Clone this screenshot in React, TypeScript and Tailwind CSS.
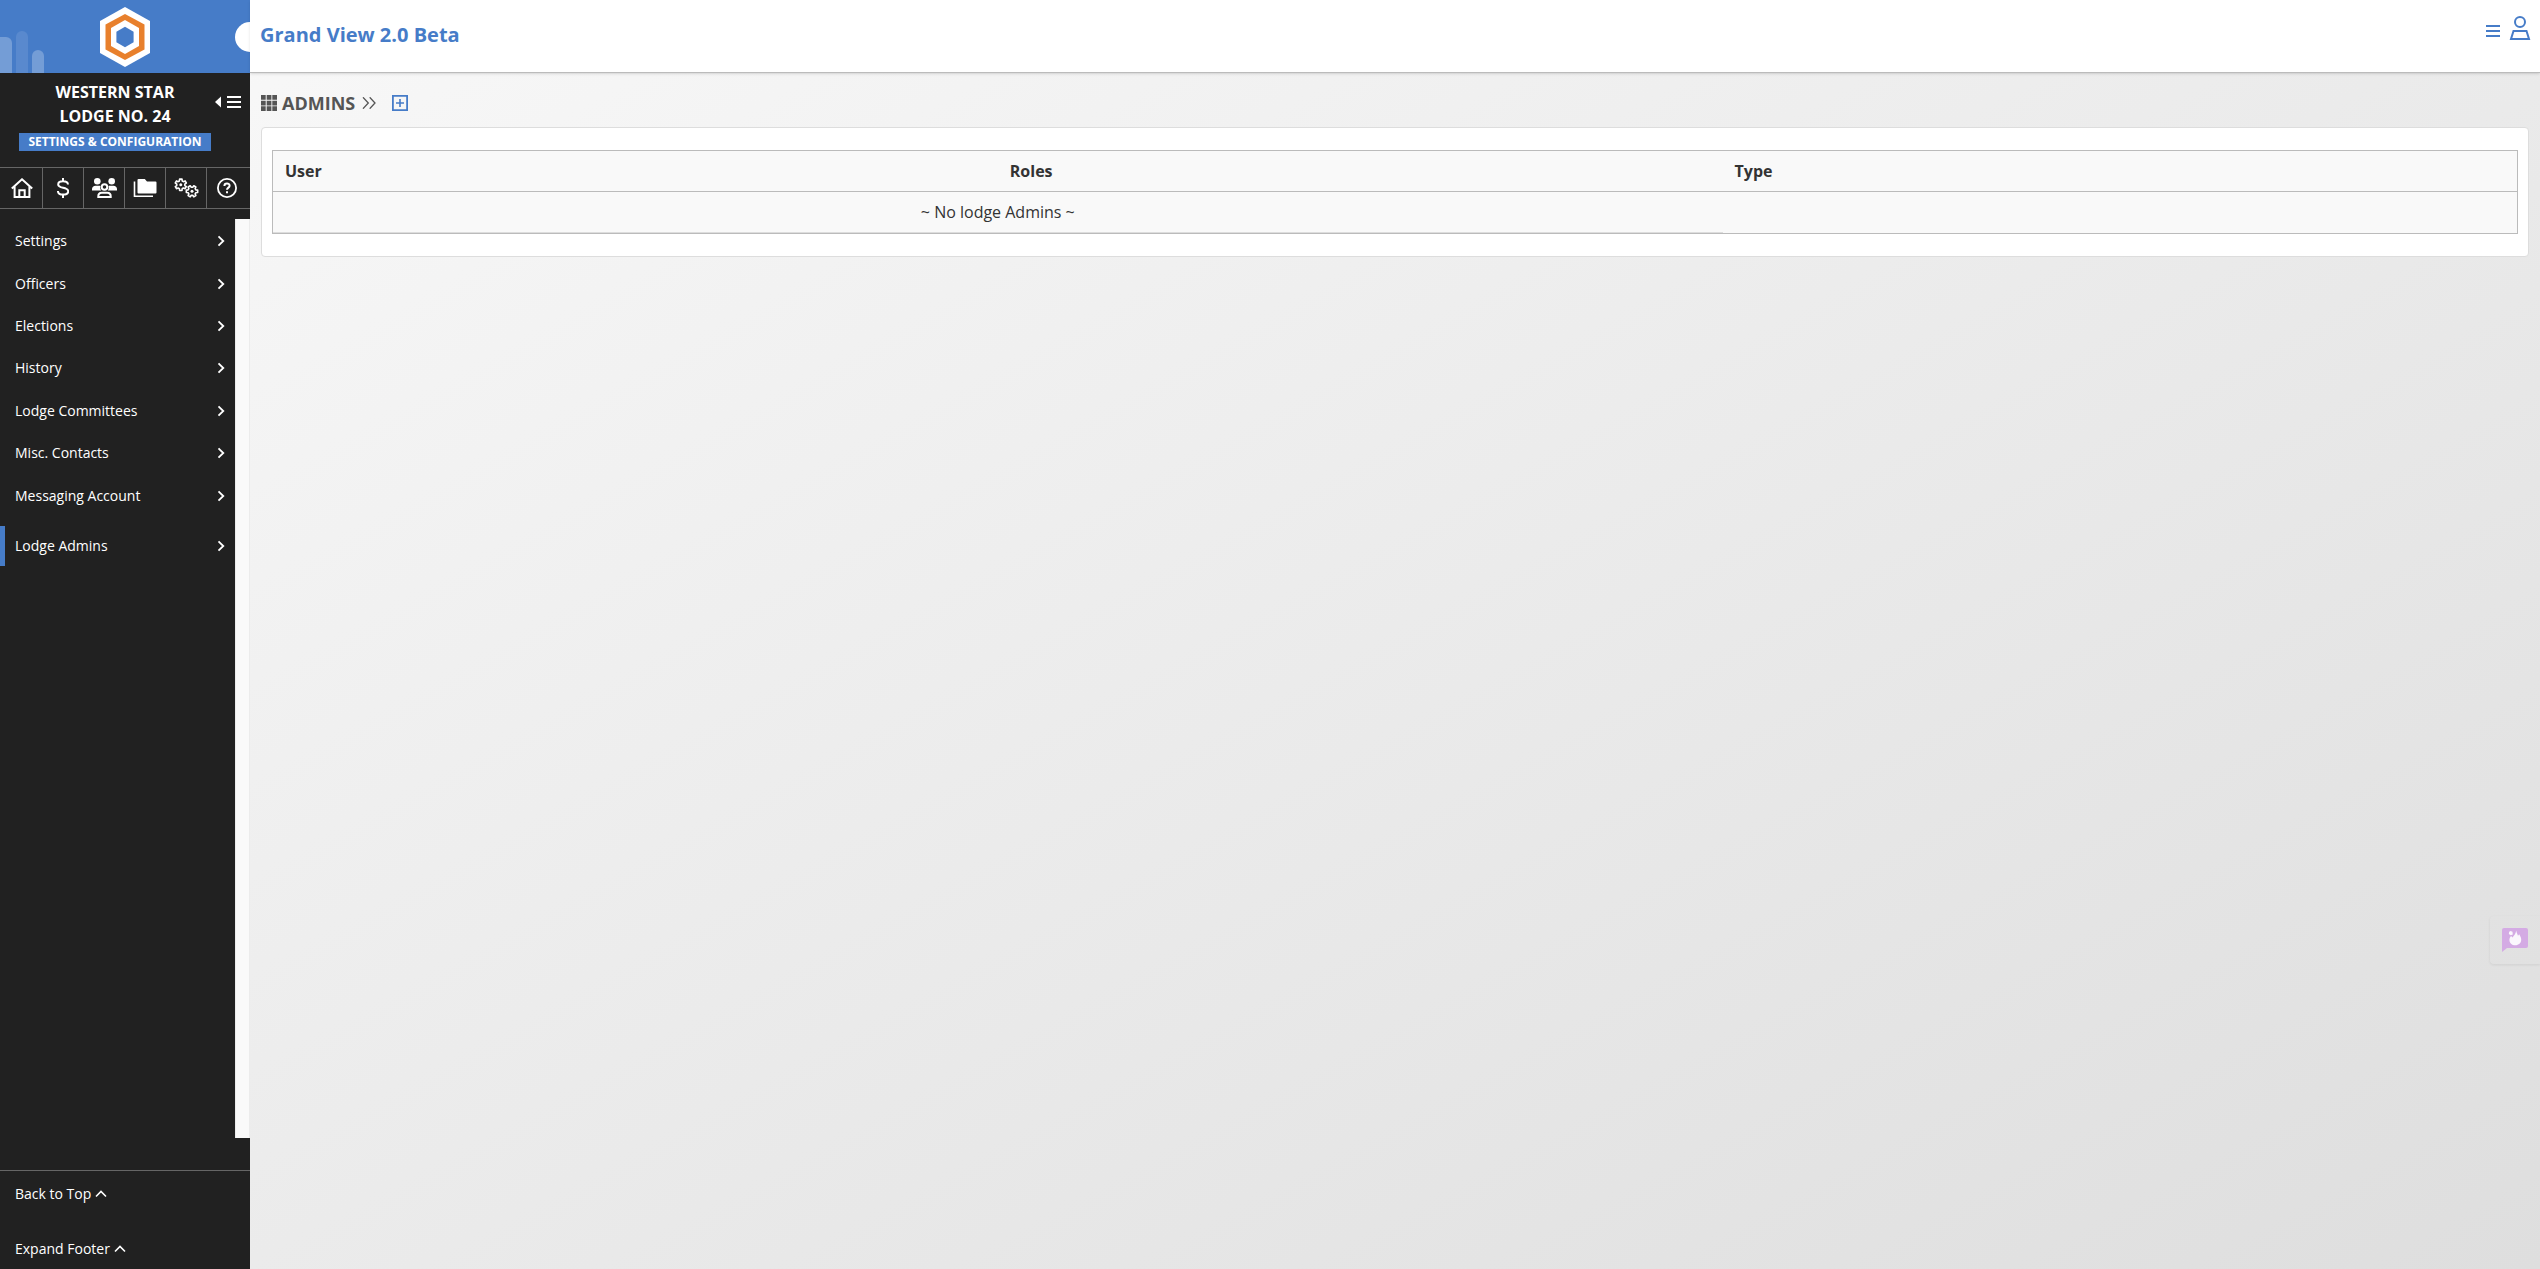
import React from 'react';

const menu = ['Settings', 'Officers', 'Elections', 'History', 'Lodge Committees', 'Misc. Contacts', 'Messaging Account'];

function Svg({ className, box = '0 0 24 24', children }: { className: string; box?: string; children: React.ReactNode }) {
  return (
    <svg className={className} viewBox={box} fill="none" stroke="currentColor" strokeWidth={2} aria-hidden="true">
      {children}
    </svg>
  );
}

const Chevron = () => (
  <Svg className="h-3 w-2" box="0 0 8 12">
    <path d="M1.500 1.300 6.300 6l-4.800 4.700" strokeWidth={1.800} />
  </Svg>
);

const Caret = () => (
  <Svg className="h-2 w-3" box="0 0 12 8">
    <path d="M1 6.500 6 1.500l5 5" strokeWidth={1.600} />
  </Svg>
);

// Outline of a six-toothed cog centred on the origin.
const cog = Array.from({ length: 6 }, (_, i) => {
  const corners: [number, number][] = [[-20, 4.1], [-12, 5.8], [12, 5.8], [20, 4.1]];
  return corners
    .map(([offset, r]) => {
      const a = ((i * 60 + offset) * Math.PI) / 180;
      return `${(r * Math.cos(a)).toFixed(2)} ${(r * Math.sin(a)).toFixed(2)}`;
    })
    .join('L');
}).join('L');

function Gear({ x, y, turn }: { x: number; y: number; turn: number }) {
  return (
    <g transform={`translate(${x} ${y}) rotate(${turn})`} strokeWidth={1.6} strokeLinejoin="round">
      <path d={`M${cog}Z`} />
      <circle r="1.500" fill="currentColor" stroke="none" />
    </g>
  );
}

const tools: { label: string; icon: React.ReactNode }[] = [
  {
    label: 'Home',
    icon: (
      <Svg className="h-5 w-[22px]" box="0 0 22 20">
        <path d="M.8 10.600 11 1.300l10.200 9.300M3.600 8.500V19h14.800V8.500M8.300 19v-6.700h5.400V19" />
      </Svg>
    ),
  },
  {
    label: 'Finance',
    icon: (
      <Svg className="h-5 w-3" box="0 0 12 20">
        <path d="M6 0v3.500M6 16.500V20M11 6.500C10.800 4.200 8.800 3.300 6 3.300S1.200 4.300 1.200 6.400C1.200 11 11.200 8.500 11.200 13.300c0 2.300-2.200 3.300-5.200 3.300S1 15.600.9 13" />
      </Svg>
    ),
  },
  {
    label: 'Members',
    icon: (
      <Svg className="h-5 w-[25px]" box="0 0 25 20">
        <g fill="currentColor" stroke="none">
          <circle cx="5.300" cy="3.300" r="3.300" />
          <circle cx="19.700" cy="3.300" r="3.300" />
          <path d="M0 12.500V11c0-2 1.500-3.300 3.500-3.300h3.700c.5 0 1 .1 1.300.3-.6 1.700-.3 3.300.7 4.500ZM25 12.500V11c0-2-1.500-3.300-3.500-3.300h-3.700c-.5 0-1 .1-1.300.3.600 1.700.3 3.300-.7 4.500Z" />
        </g>
        <circle cx="12.500" cy="9" r="2.800" />
        <path d="M6.300 19v-.7c0-2 1.500-3.500 3.500-3.500h5.400c2 0 3.500 1.500 3.500 3.500v.7Z" />
      </Svg>
    ),
  },
  {
    label: 'Files',
    icon: (
      <Svg className="h-5 w-6" box="0 0 24 20">
        <path d="M5.500 1h6.300L14 3.500h8.500a1 1 0 0 1 1 1v10a1 1 0 0 1-1 1h-17a1 1 0 0 1-1-1V2a1 1 0 0 1 1-1Z" fill="currentColor" stroke="none" />
        <path d="M1.500 3.500v14.700H20" strokeWidth={1.600} />
      </Svg>
    ),
  },
  {
    label: 'Settings',
    icon: (
      <Svg className="h-5 w-[25px]" box="0 0 25 20">
        <Gear x={6.800} y={6.800} turn={30} />
        <Gear x={18} y={13.300} turn={0} />
      </Svg>
    ),
  },
  {
    label: 'Help',
    icon: (
      <Svg className="h-5 w-5" box="0 0 20 20">
        <circle cx="10" cy="10" r="9.100" strokeWidth={1.800} />
        <path d="M7.400 7.900c0-3.200 5.200-3.100 5.200-.2 0 1.900-2.600 1.900-2.600 4M10 13.300v2" />
      </Svg>
    ),
  },
];

export default function App() {
  return (
    <div className="flex min-h-screen bg-[#212121] font-['Open_Sans','Noto_Sans',sans-serif] text-[#333]">
      <aside className="flex w-[250px] shrink-0 flex-col text-white">
        <div className="relative flex h-[73px] items-center justify-center overflow-hidden bg-[#467cc8]">
          <div className="absolute bottom-0 left-0 flex items-end gap-1">
            <span className="h-9 w-3 rounded-tr-md bg-white/25" />
            <span className="h-[42px] w-3 rounded-t-md bg-white/10" />
            <span className="h-[23px] w-3 rounded-t-md bg-white/25" />
          </div>
          <svg className="h-[60px] w-[50px]" viewBox="0 0 50 60" aria-label="Grand View logo" role="img">
            <path d="M25 0 50 14v32L25 60 0 46V14Z" fill="#fff" />
            <path d="M25 7 44.500 17.500v25L25 53 5.500 42.500v-25Z" fill="#e8802c" />
            <path d="M25 13 39 21v18L25 47 11 39V21Z" fill="#fff" />
            <path d="M25 19.700l8.600 5.100v10.400L25 40.300l-8.600-5.100V24.800Z" fill="#467cc8" />
          </svg>
          <span className="absolute -right-[15px] h-[30px] w-[30px] rounded-full bg-white" />
        </div>

        <div className="flex h-[94px] pt-[7px]">
          <div className="w-[230px] shrink-0 text-center">
            <p className="text-base leading-6 font-bold">
              WESTERN STAR
              <br />
              LODGE NO. 24
            </p>
            <span className="mx-auto mt-[5px] block w-48 bg-[#467cc8] text-xs leading-[18px] font-bold">SETTINGS &amp; CONFIGURATION</span>
          </div>
          <button type="button" aria-label="Collapse menu" className="-ml-4 flex h-11 w-7 items-center">
            <Svg className="h-[14px] w-7" box="0 0 28 14">
              <path d="M7 1.500v11L1 7Z" fill="currentColor" stroke="none" />
              <path d="M13 2h14M13 7h14M13 12h14" />
            </Svg>
          </button>
        </div>

        <nav
          aria-label="Sections"
          className="grid h-[42px] grid-cols-[43px_repeat(4,41px)_1fr] divide-x divide-[#666] border-y border-[#666]"
        >
          {tools.map((t) => (
            <a key={t.label} href="#" aria-label={t.label} className="flex items-center justify-center pb-px first:pl-[2px] last:pr-[3px]">
              {t.icon}
            </a>
          ))}
        </nav>

        <div className="mt-[10px] mb-8 flex flex-1">
          <div className="flex-1 pt-px text-sm leading-5">
            <ul className="grid h-[297px] auto-rows-fr">
              {menu.map((m) => (
                <li key={m} className="grid">
                  <a href="#" className="flex items-center justify-between pr-[10px] pl-[15px]">
                    {m}
                    <Chevron />
                  </a>
                </li>
              ))}
            </ul>
            <a
              href="#"
              aria-current="page"
              className="mt-[9px] flex h-10 items-center justify-between border-l-[5px] border-[#467cc8] pr-[10px] pl-[10px]"
            >
              Lodge Admins
              <Chevron />
            </a>
          </div>
          <div className="w-[15px] border-x border-[#ececec] bg-[#fafafa]" />
        </div>

        <div className="flex h-[99px] flex-col gap-[35px] border-t border-[#666] px-[15px] pt-[13px] text-sm leading-5">
          <a href="#" className="flex items-center gap-1">
            Back to Top <Caret />
          </a>
          <a href="#" className="flex items-center gap-1">
            Expand Footer <Caret />
          </a>
        </div>
      </aside>

      <div className="relative flex min-w-0 flex-1 flex-col bg-linear-to-br from-[#f8f8f8] to-[#dedede]">
        <header className="flex h-[73px] justify-between border-b border-[#bbb] bg-white pr-[9px] pl-[10px] text-[#467cc8] shadow-sm">
          <h1 className="pt-[21px] text-xl leading-7 font-bold">Grand View 2.0 Beta</h1>
          <div className="flex gap-2 pt-4">
            <button type="button" aria-label="Menu" className="h-[30px] w-[16px]">
              <Svg className="h-[14px] w-4" box="0 0 16 14">
                <path d="M1 2h14M1 7h14M1 12h14" />
              </Svg>
            </button>
            <button type="button" aria-label="Account" className="h-6 w-[22px]">
              <Svg className="h-6 w-[22px]" box="0 0 22 24">
                <circle cx="11" cy="6" r="5" />
                <path d="M4.500 15h13l2.500 8H2Z" />
              </Svg>
            </button>
          </div>
        </header>

        <main className="px-[11px] pt-[15px]">
          <div className="flex h-[30px] items-center text-[#555]">
            <svg className="h-4 w-4" viewBox="0 0 16 16" fill="currentColor" aria-hidden="true">
              <path d="M0 0h4.700v4.700H0zM5.700 0h4.700v4.700H5.700zM11.300 0H16v4.700h-4.700zM0 5.700h4.700v4.700H0zM5.700 5.700h4.700v4.700H5.700zM11.300 5.700H16v4.700h-4.700zM0 11.300h4.700V16H0zM5.700 11.300h4.700V16H5.700zM11.300 11.300H16V16h-4.700z" />
            </svg>
            <h2 className="ml-[5px] text-lg leading-6 font-bold">ADMINS</h2>
            <Svg className="ml-[7px] h-3 w-[14px]" box="0 0 14 12">
              <path d="M1 .3 6.300 6 1 11.700M7.700 .3 13 6l-5.300 5.700" strokeWidth={1.300} />
            </Svg>
            <button type="button" aria-label="Add admin" className="ml-4 text-[#467cc8]">
              <Svg className="h-4 w-4" box="0 0 16 16">
                <path d="M.9 .9h14.200v14.200H.9Z" strokeWidth={1.800} />
                <path d="M8 4v8M4 8h8" strokeWidth={1.600} />
              </Svg>
            </button>
          </div>

          <section className="mt-[9px] rounded-sm border border-[#ddd] bg-white px-[10px] py-[22px]">
            <table className="w-full table-fixed border-separate border-spacing-0 border border-[#bbb] bg-[#f9f9f9] text-base leading-6">
              <colgroup>
                <col className="w-[32.3%]" />
                <col className="w-[32.3%]" />
                <col />
              </colgroup>
              <thead>
                <tr className="h-[41px] text-left">
                  <th className="border-b border-[#bbb] px-3 font-bold">User</th>
                  <th className="border-b border-[#bbb] px-3 font-bold">Roles</th>
                  <th className="border-b border-[#bbb] px-3 font-bold">Type</th>
                </tr>
              </thead>
              <tbody>
                <tr className="h-[41px]">
                  <td colSpan={2} className="border-b border-[#ddd] px-3 text-center">~ No lodge Admins ~</td>
                  <td />
                </tr>
              </tbody>
            </table>
          </section>
        </main>

        <button type="button" aria-label="Report a problem" className="absolute right-0 bottom-[305px] flex h-12 w-[50px] items-center justify-center rounded-l shadow-[0_1px_3px_rgba(0,0,0,0.08)]">
          <svg className="h-6 w-[26px]" viewBox="0 0 26 24" aria-hidden="true">
            <path d="M2 0h22a2 2 0 0 1 2 2v16a2 2 0 0 1-2 2H5l-5 4V2a2 2 0 0 1 2-2Z" fill="#d4abe4" />
            <path d="M14.200 2.500c.3 2.500 1.300 3.300 1.800 5.300l1.200-1.600c1.500 2.400 2 4 2 5.500 0 3.200-2.600 5.500-5.900 5.500s-5.900-2.300-5.900-5.300c0-1.600.7-2.900 1.700-4l1.400 1.700c1.500-2 3.300-3.800 3.700-7.100ZM8.500 3l2 .8.300 2.700-2 .8L6.800 6l.4-2.200Z" fill="#fff" opacity=".9" />
          </svg>
        </button>
      </div>
    </div>
  );
}
